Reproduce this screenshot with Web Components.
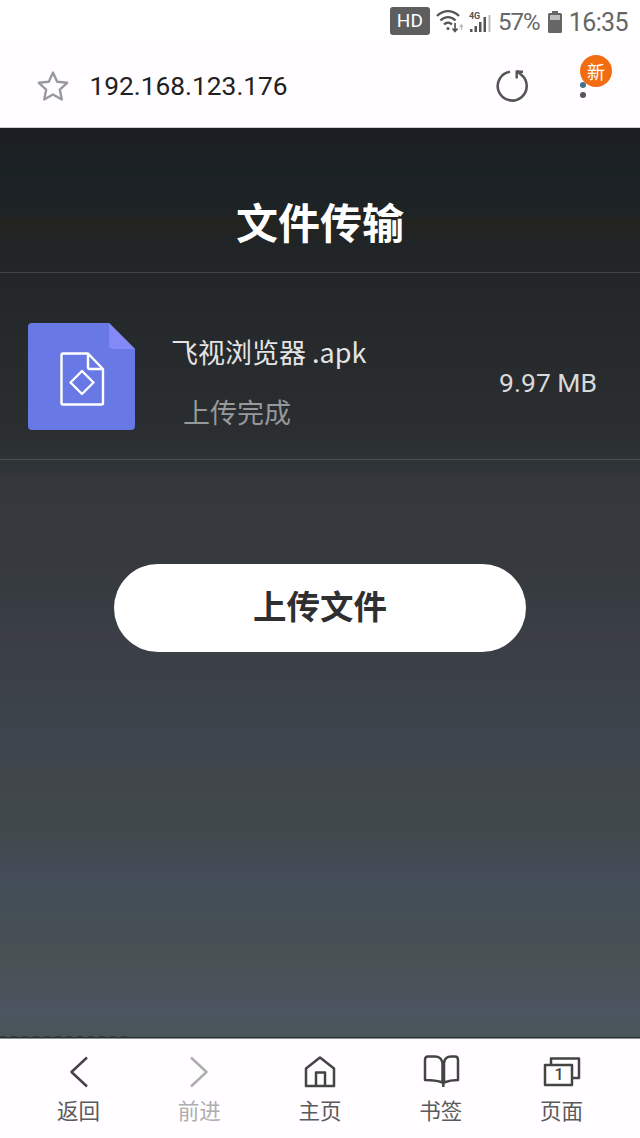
<!DOCTYPE html>
<html lang="zh">
<head>
<meta charset="utf-8">
<title>文件传输</title>
<style>
  html, body { margin: 0; padding: 0; }
  body {
    width: 640px;
    height: 1138px;
    overflow: hidden;
    display: flex;
    flex-direction: column;
    background: #fff;
    font-family: Roboto, "Noto Sans CJK SC", sans-serif;
  }
</style>
</head>
<body>
<status-bar></status-bar>
<url-bar url="192.168.123.176"></url-bar>
<transfer-page heading="文件传输">
  <file-row name="飞视浏览器 .apk" state="上传完成" size="9.97 MB"></file-row>
  <upload-button>上传文件</upload-button>
</transfer-page>
<nav-bar>
  <nav-item label="返回" icon="back"></nav-item>
  <nav-item label="前进" icon="forward" disabled></nav-item>
  <nav-item label="主页" icon="home"></nav-item>
  <nav-item label="书签" icon="book"></nav-item>
  <nav-item label="页面" icon="pages"></nav-item>
</nav-bar>

<script>
const FONT = `Roboto, "Noto Sans CJK SC", sans-serif`
const CJK = `"Noto Sans CJK SC", sans-serif`

class StatusBar extends HTMLElement {
  constructor () {
    super()
    this.attachShadow({ mode: 'open' }).innerHTML =
`<style>
  :host {
    display: flex;
    align-items: center;
    justify-content: flex-end;
    height: 42px;
    padding: 2px 12px 0 0;
    box-sizing: border-box;
    color: #666;
    font: 25px ${FONT};
    letter-spacing: -.6px;
    background: #fff;
  }
  .hd {
    width: 40px;
    height: 28px;
    margin: -2px 6px 0 0;
    border-radius: 3px;
    background: #5e5e5e;
    color: #fff;
    font-size: 19px;
    letter-spacing: 0;
    line-height: 28px;
    text-align: center;
  }
  .signal { position: relative; width: 24px; height: 24px; margin: 0 6px 0 5px; }
  .signal span {
    position: absolute;
    left: 1px;
    top: 1px;
    font-size: 9px;
    font-weight: 700;
    letter-spacing: 0;
    line-height: 11px;
    color: #555;
  }
  .pct { margin-right: 8px; font-size: 24px; letter-spacing: -.9px; }
  .time { margin-left: 7px; }
  svg { display: block; flex: none; }
</style>
<div class="hd">HD</div>
<svg width="27" height="24" viewBox="0 0 27 24" fill="none" stroke="#555" stroke-width="2.300">
  <path d="M1 6C7.500 -.5 16.500 -.5 23 6"/>
  <path d="M4.500 10.500C9 6 15 6 19.500 10.500"/>
  <path d="M8 14.500C10.500 12 13.500 12 16 14.500"/>
  <circle cx="12" cy="18.500" r="1.500" fill="#555" stroke="none"/>
  <path d="M19 13v8M16.500 18.500l2.500 3l2.500-3" stroke-width="1.700"/>
  <path d="M25.500 20v-5M23.800 17l1.700-2.200l1.700 2.200" stroke="#bbb" stroke-width="1.300"/>
</svg>
<div class="signal">
  <span>4G</span>
  <svg width="24" height="24" viewBox="0 0 24 24">
    <rect x="2" y="19" width="2.500" height="3" fill="#555"/>
    <rect x="6.500" y="16" width="2.500" height="6" fill="#555"/>
    <rect x="11" y="12" width="2.500" height="10" fill="#555"/>
    <rect x="15.500" y="7" width="2.500" height="15" fill="#555"/>
    <rect x="20.500" y="5" width="2" height="17" fill="#bbb"/>
  </svg>
</div>
<span class="pct">57%</span>
<svg width="14" height="22" viewBox="0 0 14 22">
  <rect x="4" y="0" width="6" height="3" fill="#666"/>
  <rect x="0" y="2" width="14" height="20" rx="1.500" fill="#666"/>
  <rect x="2" y="4" width="10" height="5" fill="#bdbdbd"/>
</svg>
<span class="time">16:35</span>`
  }
}

class UrlBar extends HTMLElement {
  constructor () {
    super()
    this.attachShadow({ mode: 'open' }).innerHTML =
`<style>
  :host {
    display: flex;
    align-items: center;
    height: 86px;
    box-sizing: border-box;
    padding: 2px 0 0 37px;
    background: #fffdff;
    color: #212121;
    font: 26.300px ${FONT};
    border-bottom: 1px solid #cfcfd2;
  }
  .url { margin-left: 20.500px; flex: 1; }
  .more {
    position: relative;
    display: flex;
    flex-direction: column;
    gap: 4px;
    width: 6px;
    margin: 9px 54px 0 51px;
  }
  .more i { display: block; width: 6px; height: 6px; border-radius: 50%; background: #555; }
  .more i:first-child { background: #44708c; }
  .badge {
    position: absolute;
    left: 0;
    top: -27px;
    width: 32px;
    height: 32px;
    border-radius: 50%;
    background: #f26c12;
    color: #fff;
    font: 18px/32px ${CJK};
    text-align: center;
  }
  svg { display: block; flex: none; }
</style>
<svg width="32" height="32" viewBox="0 0 32 32" fill="none" stroke="#9a9a9c" stroke-width="2.400" stroke-linejoin="round">
  <path d="M16 2.500l4.200 9.200l10 1.100l-7.400 6.800l2 9.900l-8.800-5l-8.800 5l2-9.900l-7.400-6.800l10-1.100z"/>
</svg>
<span class="url"></span>
<svg width="34" height="34" viewBox="0 0 34 34" fill="none" stroke="#555" stroke-width="2.600">
  <path d="M21.700 1.800L26 5.500A14.500 14.500 0 1 1 15 2.700"/>
  <path d="M28 2.800H21.700V9.500" stroke-width="2.400"/>
</svg>
<div class="more"><i></i><i></i><span class="badge">新</span></div>`
    this.shadowRoot.querySelector('.url').textContent = this.getAttribute('url')
  }
}

class TransferPage extends HTMLElement {
  constructor () {
    super()
    this.attachShadow({ mode: 'open' }).innerHTML =
`<style>
  :host {
    display: flex;
    flex-direction: column;
    flex: 1;
    min-height: 0;
    background: linear-gradient(180deg,
      #1c1f23 0, #1b2224 42px, #1e2326 85px, #24241f 95px, #212427 115px, #232629 142px,
      #26292c 192px, #2a2e31 302px, #2e3336 332px, #34373b 355px, #35383c 380px,
      #36393d 432px, #373e43 490px, #3b3e46 506px, #3b4146 554px, #3d4650 628px,
      #404649 647px, #424a4f 722px, #434c58 739px, #454f55 792px, #485153 832px,
      #4c5560 882px, #4a5558 909px);
    color: #fff;
  }
  header {
    height: 145px;
    box-sizing: border-box;
    padding-top: 63px;
    border-bottom: 1px solid rgba(255,255,255,.14);
    font: 700 42px/60px ${CJK};
    text-align: center;
  }
  .content {
    display: flex;
    flex-direction: column;
    flex: 1;
  }
  .tail {
    width: 132px;
    height: 2px;
    margin-top: auto;
    background: repeating-linear-gradient(90deg, #33393d 0 6px, transparent 6px 11px);
  }
</style>
<header></header>
<div class="content"><slot></slot><div class="tail"></div></div>`
    this.shadowRoot.querySelector('header').textContent = this.getAttribute('heading')
  }
}

class FileRow extends HTMLElement {
  constructor () {
    super()
    this.attachShadow({ mode: 'open' }).innerHTML =
`<style>
  :host {
    display: flex;
    align-items: center;
    height: 187px;
    box-sizing: border-box;
    padding: 21px 43px 0 28px;
    border-bottom: 1px solid rgba(255,255,255,.14);
  }
  svg { display: block; flex: none; }
  .text { flex: 1; margin: 11px 0 0 36px; }
  .name { font: 27px/40px ${CJK}; color: #e4e4e4; }
  .state { font: 27px/40px ${CJK}; color: #96989a; margin: 20px 0 0 12px; }
  .size { font: 26.500px ${FONT}; color: #d8d9da; margin-top: 11px; }
</style>
<svg width="107" height="107" viewBox="0 0 107 107">
  <path d="M4 0H81L107 26V103a4 4 0 0 1-4 4H4a4 4 0 0 1-4-4V4a4 4 0 0 1 4-4z" fill="#6879e6"/>
  <path d="M81 0L107 26H85a4 4 0 0 1-4-4z" fill="#8389f6"/>
  <g fill="none" stroke="#fff" stroke-width="2.400" stroke-linejoin="round">
    <path d="M35 30.500H60L75 46V80a1.500 1.500 0 0 1-1.500 1.500H35a1.500 1.500 0 0 1-1.500-1.500V32a1.500 1.500 0 0 1 1.500-1.500z"/>
    <path d="M60 30.500V44a2 2 0 0 0 2 2H75"/>
    <path d="M54 48L65.500 59.500L54 71L42.500 59.500z"/>
  </g>
</svg>
<div class="text"><div class="name"></div><div class="state"></div></div>
<div class="size"></div>`
    const $ = s => this.shadowRoot.querySelector(s)
    $('.name').textContent = this.getAttribute('name')
    $('.state').textContent = this.getAttribute('state')
    $('.size').textContent = this.getAttribute('size')
  }
}

class UploadButton extends HTMLElement {
  constructor () {
    super()
    this.attachShadow({ mode: 'open' }).innerHTML =
`<style>
  :host {
    display: flex;
    align-items: center;
    justify-content: center;
    width: 412px;
    height: 88px;
    box-sizing: border-box;
    padding-bottom: 6px;
    margin: 104px auto 0;
    border-radius: 44px;
    background: #fff;
    color: #2f2f2f;
    font: 700 33.500px/1 ${CJK};
  }
</style>
<slot></slot>`
  }
}

class NavBar extends HTMLElement {
  constructor () {
    super()
    this.attachShadow({ mode: 'open' }).innerHTML =
`<style>
  :host {
    display: flex;
    height: 100px;
    box-sizing: border-box;
    padding: 0 18px;
    background: #fffdff;
    border-top: 1px solid #8d8f91;
    box-shadow: 0 -1px 0 #2c3234;
  }
</style>
<slot></slot>`
  }
}

const NAV_ICONS = {
  back: '<path d="M27 1.500L11.500 16L27 30.500"/>',
  forward: '<path d="M10 1.500L25.500 16L10 30.500"/>',
  home: '<path d="M4 30V12.500L18 1.500L32 12.500V30z"/><path d="M14 30V16.500h9V30"/>',
  book: '<path d="M19.500 26.500C15 24.800 8 24 2 24V4C2 2 3 .5 5 .5H12C16 .5 18.800 3 19.500 7z"/><path d="M21 7C21.500 3 24 .5 28 .5H32C34 .5 35 2 35 4V24C30 24 25 24.800 21 26.500z"/><path d="M20.300 26V31"/>',
  pages: '<path d="M7 9V2.500H35V22H28"/><path d="M1 9H28V29H1z"/><text x="15" y="24" text-anchor="middle" font-size="16" font-family="Roboto" font-weight="500" fill="#444" stroke="none">1</text>'
}

class NavItem extends HTMLElement {
  constructor () {
    super()
    this.attachShadow({ mode: 'open' }).innerHTML =
`<style>
  :host {
    display: flex;
    flex: 1;
    flex-direction: column;
    align-items: center;
    padding-top: 17px;
    color: #5a5a5a;
    font: 21.500px/30px ${CJK};
    --icon: #444;
  }
  :host([disabled]) { color: #aeaeae; --icon: #aeaeae; }
  svg { display: block; margin-bottom: 5px; overflow: visible; stroke: var(--icon); }
</style>
<svg width="36" height="34" viewBox="0 0 36 34" fill="none" stroke-width="2.500" stroke-linejoin="round">${NAV_ICONS[this.getAttribute('icon')]}</svg>
<span></span>`
    this.shadowRoot.querySelector('span').textContent = this.getAttribute('label')
  }
}

customElements.define('status-bar', StatusBar)
customElements.define('url-bar', UrlBar)
customElements.define('transfer-page', TransferPage)
customElements.define('file-row', FileRow)
customElements.define('upload-button', UploadButton)
customElements.define('nav-bar', NavBar)
customElements.define('nav-item', NavItem)
</script>
</body>
</html>
